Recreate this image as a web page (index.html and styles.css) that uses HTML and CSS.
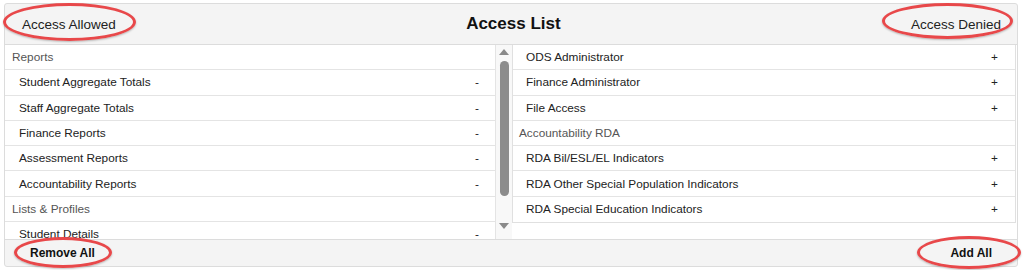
FILE: index.html
```html
<!DOCTYPE html>
<html>

<head>
    <meta charset="utf-8">
    <title>Access List</title>
    <link rel="stylesheet" href="styles.css">
</head>

<body>
    <div class="panel">
        <div class="panel-head">
            <span class="side-title">Access Allowed</span>
            <h1>Access List</h1>
            <span class="side-title">Access Denied</span>
        </div>

        <div class="panel-body">
            <div class="list allowed">
                <div class="group">Reports</div>
                <div class="item"><span>Student Aggregate Totals</span><span>-</span></div>
                <div class="item"><span>Staff Aggregate Totals</span><span>-</span></div>
                <div class="item"><span>Finance Reports</span><span>-</span></div>
                <div class="item"><span>Assessment Reports</span><span>-</span></div>
                <div class="item"><span>Accountability Reports</span><span>-</span></div>
                <div class="group">Lists &amp; Profiles</div>
                <div class="item"><span>Student Details</span><span>-</span></div>
            </div>

            <div class="scrollbar">
                <div class="arrow up"></div>
                <div class="thumb"></div>
                <div class="arrow down"></div>
            </div>

            <div class="denied-wrap">
                <div class="list denied">
                    <div class="item"><span>ODS Administrator</span><span>+</span></div>
                    <div class="item"><span>Finance Administrator</span><span>+</span></div>
                    <div class="item"><span>File Access</span><span>+</span></div>
                    <div class="group">Accountability RDA</div>
                    <div class="item"><span>RDA Bil/ESL/EL Indicators</span><span>+</span></div>
                    <div class="item"><span>RDA Other Special Population Indicators</span><span>+</span></div>
                    <div class="item last"><span>RDA Special Education Indicators</span><span>+</span></div>
                </div>
            </div>
        </div>

        <div class="panel-foot">
            <button>Remove All</button>
            <button>Add All</button>
        </div>
    </div>

    <!-- red annotation rings -->
    <div class="ring ring-allowed"></div>
    <div class="ring ring-denied"></div>
    <div class="ring ring-remove"></div>
    <div class="ring ring-add"></div>
</body>

</html>
```

FILE: styles.css
```css
body {
    margin: 0;
    font-family: 'Liberation Sans', Arial, sans-serif;
    background: #fff;
    color: #222;
    position: relative;
    height: 270px;
    overflow: hidden;
}

.panel {
    margin: 3px 6px 0 4px;
    border: 1px solid #dcdcdc;
    border-radius: 3px;
    background: #f4f4f4;
}

.panel-head {
    height: 40px;
    display: flex;
    align-items: center;
    justify-content: space-between;
    padding: 0 16px 0 17px;
    border-bottom: 1px solid #dcdcdc;
}

.side-title {
    font-size: 13.5px;
    color: #222;
}

h1 {
    margin: 0;
    font-size: 17px;
    font-weight: bold;
    color: #111;
}

.panel-body {
    display: flex;
    height: 194px;
    overflow: hidden;
    background: #fff;
    border-bottom: 1px solid #dcdcdc;
}

.list {
    font-size: 11.8px;
}

.allowed {
    width: 490px;
    border-right: 1px solid #e4e4e4;
}

.item,
.group {
    height: 25.3px;
    box-sizing: border-box;
    display: flex;
    align-items: center;
    border-bottom: 1px solid #e4e4e4;
}

.item {
    justify-content: space-between;
    padding: 0 16px 0 14px;
}

.group {
    padding-left: 7px;
    color: #555;
}

.scrollbar {
    width: 16px;
    background: #f8f8f8;
    display: flex;
    flex-direction: column;
    align-items: center;
}

.arrow {
    width: 0;
    height: 0;
    border-left: 5px solid transparent;
    border-right: 5px solid transparent;
}

.arrow.up {
    margin-top: 4px;
    border-bottom: 6px solid #8a8a8a;
}

.arrow.down {
    margin-top: 27px;
    border-top: 6px solid #8a8a8a;
}

.thumb {
    margin-top: 6px;
    width: 9px;
    height: 135px;
    border-radius: 5px;
    background: #8c8c8c;
}

.denied-wrap {
    flex: 1;
}

.denied {
    border: 1px solid #e0e0e0;
    border-top: none;
    margin-right: 1px;
}

.denied .item {
    padding: 0 17px 0 13px;
}

.denied .group {
    padding-left: 6px;
}

.denied .item.last {
    border-bottom: none;
}

.panel-foot {
    height: 26px;
    display: flex;
    align-items: center;
    justify-content: space-between;
    padding: 0 25px 0 25px;
}

button {
    border: none;
    background: none;
    padding: 0;
    font-family: 'Liberation Sans', Arial, sans-serif;
    font-size: 12px;
    font-weight: bold;
    color: #111;
}

.ring {
    position: absolute;
    border: 3px solid #e8484a;
    border-radius: 50%;
    box-sizing: border-box;
    box-shadow: 0 1px 2px rgba(0, 0, 0, 0.25);
}

.ring-allowed {
    left: 3px;
    top: 3px;
    width: 133px;
    height: 38px;
}

.ring-denied {
    left: 882px;
    top: 3px;
    width: 131px;
    height: 36px;
}

.ring-remove {
    left: 14px;
    top: 237px;
    width: 98px;
    height: 31px;
}

.ring-add {
    left: 917px;
    top: 236px;
    width: 104px;
    height: 33px;
}
```
